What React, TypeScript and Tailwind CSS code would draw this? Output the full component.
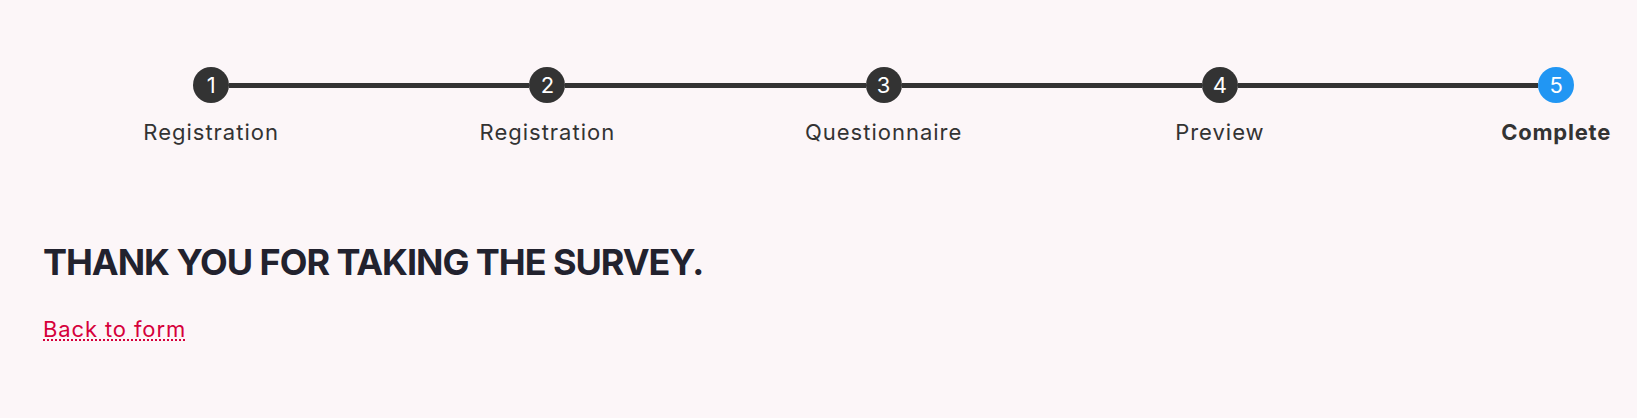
const STEPS = [
  { n: 1, label: 'Registration' },
  { n: 2, label: 'Registration' },
  { n: 3, label: 'Questionnaire' },
  { n: 4, label: 'Preview' },
  { n: 5, label: 'Complete', current: true },
];

function Step({ n, label, current, first, last }: { n: number; label: string; current?: boolean; first: boolean; last: boolean }) {
  return (
    <div className="flex w-[336.25px] shrink-0 flex-col items-center">
      <div className="flex w-full items-center">
        <div className={first ? 'h-[5px] flex-1' : 'h-[5px] flex-1 bg-[#333333]'} />
        <div
          className={
            current
              ? 'flex h-9 w-9 items-center justify-center rounded-full bg-[#2196f3] text-[22px] leading-none text-white'
              : 'flex h-9 w-9 items-center justify-center rounded-full bg-[#333333] text-[22px] leading-none text-white'
          }
        >
          {n}
        </div>
        <div className={last ? 'h-[5px] flex-1' : 'h-[5px] flex-1 bg-[#333333]'} />
      </div>
      <span
        className={
          current
            ? 'mt-[13px] text-[22px] leading-[33px] font-bold tracking-[0.035em] text-[#333333]'
            : 'mt-[13px] text-[22px] leading-[33px] tracking-[0.045em] text-[#333333]'
        }
      >
        {label}
      </span>
    </div>
  );
}

export default function App() {
  return (
    <div className="h-[418px] w-full overflow-hidden bg-[#fcf6f8] font-['Inter',sans-serif]">
      <div className="px-[43px] pt-[67px]">
        {/* Stepper */}
        <div className="flex">
          {STEPS.map((s, i) => (
            <Step key={i} n={s.n} label={s.label} current={s.current} first={i === 0} last={i === STEPS.length - 1} />
          ))}
        </div>

        <h1 className="mt-[92px] text-[36px] leading-[1.2] font-bold tracking-[-0.029em] text-[#22222e]">
          THANK YOU FOR TAKING THE SURVEY.
        </h1>

        <a
          href="#"
          className="mt-[29px] inline-block text-[22px] leading-[33px] tracking-[0.04em] text-[#d6003b] underline decoration-dotted decoration-2 underline-offset-2"
        >
          Back to form
        </a>
      </div>
    </div>
  );
}
